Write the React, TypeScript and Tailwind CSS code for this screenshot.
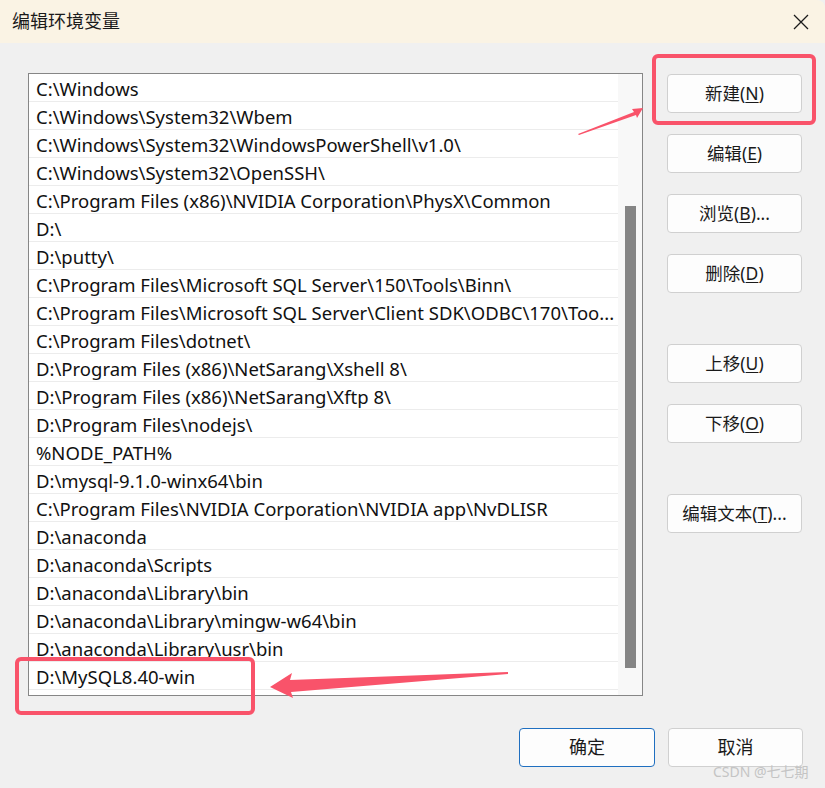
import React from "react";

const paths = [
  "C:\\Windows",
  "C:\\Windows\\System32\\Wbem",
  "C:\\Windows\\System32\\WindowsPowerShell\\v1.0\\",
  "C:\\Windows\\System32\\OpenSSH\\",
  "C:\\Program Files (x86)\\NVIDIA Corporation\\PhysX\\Common",
  "D:\\",
  "D:\\putty\\",
  "C:\\Program Files\\Microsoft SQL Server\\150\\Tools\\Binn\\",
  "C:\\Program Files\\Microsoft SQL Server\\Client SDK\\ODBC\\170\\Too...",
  "C:\\Program Files\\dotnet\\",
  "D:\\Program Files (x86)\\NetSarang\\Xshell 8\\",
  "D:\\Program Files (x86)\\NetSarang\\Xftp 8\\",
  "D:\\Program Files\\nodejs\\",
  "%NODE_PATH%",
  "D:\\mysql-9.1.0-winx64\\bin",
  "C:\\Program Files\\NVIDIA Corporation\\NVIDIA app\\NvDLISR",
  "D:\\anaconda",
  "D:\\anaconda\\Scripts",
  "D:\\anaconda\\Library\\bin",
  "D:\\anaconda\\Library\\mingw-w64\\bin",
  "D:\\anaconda\\Library\\usr\\bin",
  "D:\\MySQL8.40-win",
];

const font = { fontFamily: '"Noto Sans", "Noto Sans CJK SC", sans-serif' };

function Btn({ label, hot, tail, className = "" }: { label: string; hot: string; tail?: string; className?: string }) {
  return (
    <button
      className={`w-[135px] h-[39px] rounded-[4px] border border-[#d0d0d0] bg-[#fdfdfd] text-[17.5px] text-[#1a1a1a] flex items-center justify-center ${className}`}
    >
      {label}(<span className="underline underline-offset-2">{hot}</span>){tail}
    </button>
  );
}

export default function App() {
  return (
    <div className="relative w-[825px] h-[788px] bg-[#f0f0f0] overflow-hidden" style={font}>
      {/* Title bar */}
      <div className="h-[43px] bg-[#faf3e4] flex items-center justify-between pl-[12px] pr-[16px] rounded-tr-[8px]">
        <span className="text-[18px] text-[#1a1a1a]">编辑环境变量</span>
        <svg width="16" height="16" viewBox="0 0 16 16">
          <path d="M1 1 L15 15 M15 1 L1 15" stroke="#1a1a1a" strokeWidth="1.3" />
        </svg>
      </div>

      <div className="flex">
        {/* List */}
        <div className="ml-[28px] mt-[30px] w-[615px] h-[623px] border border-[#868686] bg-white flex">
          <div className="w-[589px] flex flex-col">
            {paths.map((p) => (
              <div
                key={p}
                className="h-[28px] shrink-0 border-b border-[#ececec] pl-[7px] pr-[2px] text-[18.5px] text-[#111] leading-[30px] whitespace-nowrap"
              >
                {p}
              </div>
            ))}
          </div>
          <div className="flex-1 bg-[#f8f8f8] flex justify-center">
            <div className="w-[11px] mt-[132px] h-[462px] bg-[#858585] ml-[1px]" />
          </div>
        </div>

        {/* Right buttons */}
        <div className="ml-[24px] mt-[31px] flex flex-col">
          <Btn label="新建" hot="N" />
          <Btn label="编辑" hot="E" className="mt-[21px]" />
          <Btn label="浏览" hot="B" tail="..." className="mt-[21px]" />
          <Btn label="删除" hot="D" className="mt-[21px]" />
          <Btn label="上移" hot="U" className="mt-[51px]" />
          <Btn label="下移" hot="O" className="mt-[21px]" />
          <Btn label="编辑文本" hot="T" tail="..." className="mt-[51px]" />
        </div>
      </div>

      {/* Bottom buttons */}
      <div className="flex justify-end gap-[13px] mt-[32px] pr-[22px]">
        <button className="w-[136px] h-[39px] rounded-[4px] border border-[#1f6fc0] bg-[#fdfdfd] text-[18px] text-[#1a1a1a]">
          确定
        </button>
        <button className="w-[135px] h-[39px] rounded-[4px] border border-[#d0d0d0] bg-[#fdfdfd] text-[18px] text-[#1a1a1a]">
          取消
        </button>
      </div>

      {/* Watermark */}
      <div className="absolute left-[713px] top-[761px] text-[14px] text-[#c4c4c4]">CSDN @七七期</div>

      {/* Annotations */}
      <div className="absolute left-[652px] top-[54px] w-[164px] h-[71px] border-[4px] border-[#f9536a] rounded-[6px]" />
      <div className="absolute left-[15px] top-[657px] w-[240px] h-[58px] border-[4px] border-[#f9536a] rounded-[6px]" />
      <svg className="absolute left-0 top-0 pointer-events-none" width="825" height="788">
        <polygon points="643,108 632,109 634,112 578,134 579,135 636,115 637,118" fill="#f9536a" />
        <polygon points="270,687 292,673 290,680 508,672 508,674 291,692 293,698" fill="#f9536a" />
      </svg>
    </div>
  );
}
